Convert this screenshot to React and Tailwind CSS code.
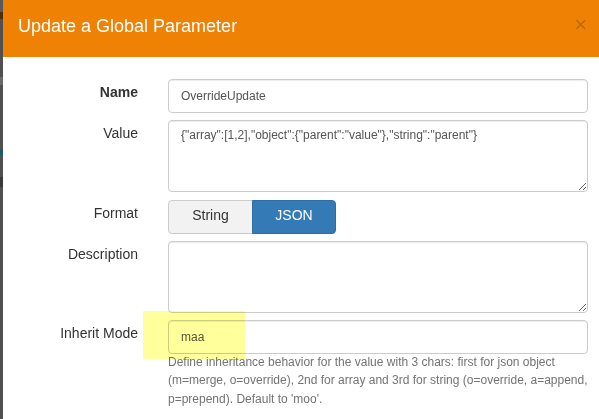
import React from "react";

export default function App() {
  const inputBase =
    "w-[420px] border border-[#cccccc] rounded-[4px] bg-white text-[12px] text-[#555555] px-[12px] shadow-[inset_0_1px_1px_rgba(0,0,0,0.075)] outline-none font-['Liberation_Sans',Arial,sans-serif]";
  const label =
    "w-[120px] shrink-0 text-right text-[14px] leading-[20px] text-[#333333] pt-[3px]";
  return (
    <div className="w-[599px] h-[419px] overflow-hidden flex bg-[#505050] font-['Liberation_Sans',Arial,sans-serif]">
      <div className="w-[3px] shrink-0 flex flex-col">
        <div className="h-[12px] bg-[#5a5a5a]" />
        <div className="h-[7px] bg-[#4a2f0c]" />
        <div className="h-[58px] bg-[#505050]" />
        <div className="h-[8px] bg-[#6a6a6a]" />
        <div className="h-[64px] bg-[#505050]" />
        <div className="h-[6px] bg-[#1f5a66]" />
        <div className="h-[22px] bg-[#505050]" />
        <div className="h-[10px] bg-[#3a3a3a]" />
        <div className="flex-1 bg-[#505050]" />
      </div>
      <div className="flex-1 bg-white relative isolate">
        <div className="h-[57px] bg-[#ef8105] flex items-start justify-between pl-[15px] pr-[12px]">
          <div className="pt-[13px] text-[18px] leading-[26px] text-white">
            Update a Global Parameter
          </div>
          <div className="pt-[14px] text-[22px] leading-[22px] text-black/20">
            ×
          </div>
        </div>
        <div className="pt-[22px] pl-[15px] flex flex-col">
          <div className="flex items-start">
            <div className={label + " font-bold"}>Name</div>
            <div className="ml-[30px]">
              <input
                readOnly
                value="OverrideUpdate"
                className={inputBase + " h-[34px]"}
              />
            </div>
          </div>
          <div className="flex items-start mt-[7px]">
            <div className={label}>Value</div>
            <div className="ml-[30px] flex">
              <textarea
                readOnly
                value={'{"array":[1,2],"object":{"parent":"value"},"string":"parent"}'}
                className={inputBase + " h-[72px] pt-[5px] leading-[18px] resize-y"}
              />
            </div>
          </div>
          <div className="flex items-start mt-[8px]">
            <div className={label}>Format</div>
            <div className="ml-[30px] flex">
              <div className="w-[85px] h-[34px] border border-[#cccccc] rounded-l-[4px] bg-[#f2f2f2] text-[14px] leading-[20px] text-[#333333] text-center pt-[4px]">
                String
              </div>
              <div className="w-[84px] h-[34px] border border-[#2e6da4] rounded-r-[4px] bg-[#337ab7] text-[14px] leading-[20px] text-white text-center pt-[4px] ml-[-1px]">
                JSON
              </div>
            </div>
          </div>
          <div className="flex items-start mt-[7px]">
            <div className={label}>Description</div>
            <div className="ml-[30px] flex">
              <textarea
                readOnly
                value=""
                className={inputBase + " h-[72px] pt-[5px] leading-[18px] resize-y"}
              />
            </div>
          </div>
          <div className="flex items-start mt-[7px]">
            <div className={label}>Inherit Mode</div>
            <div className="ml-[30px] flex flex-col">
              <input
                readOnly
                value="maa"
                className={inputBase + " h-[34px] text-[#333333]"}
              />
              <div className="w-[420px] mt-[-1px] text-[12px] leading-[18.4px] text-[#737373]">
                Define inheritance behavior for the value with 3 chars: first for json object
                (m=merge, o=override), 2nd for array and 3rd for string (o=override, a=append,
                p=prepend). Default to 'moo'.
              </div>
            </div>
          </div>
        </div>
        <div className="absolute left-[140px] top-[311px] w-[102px] h-[48px] bg-[#ffff9c] mix-blend-multiply pointer-events-none" />
      </div>
    </div>
  );
}
